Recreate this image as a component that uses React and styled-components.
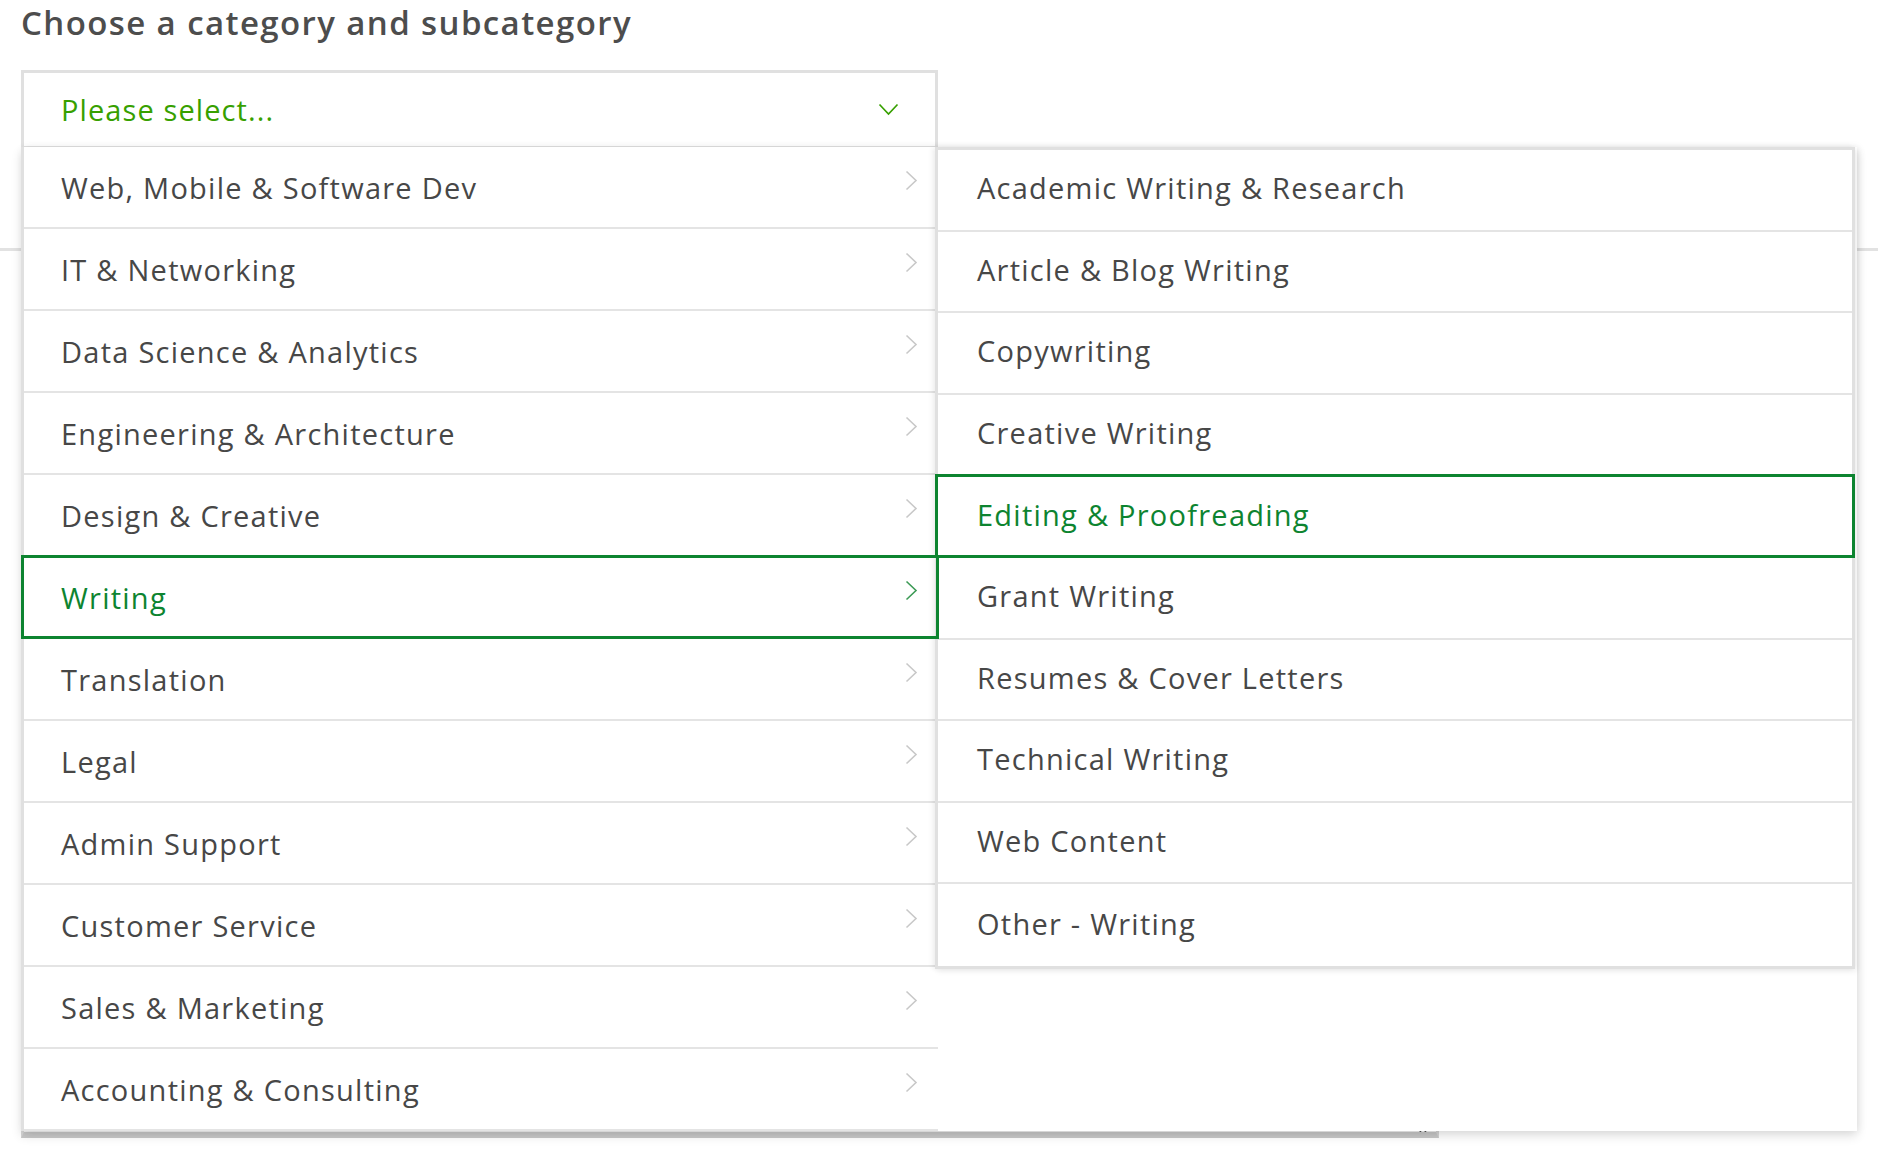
import React from "react";
import styled, { createGlobalStyle, css } from "styled-components";

const GlobalStyle = createGlobalStyle`
  html, body { margin: 0; padding: 0; background: #ffffff; }
  body { font-family: "Open Sans", "Liberation Sans", sans-serif; color: #4a4a4a; }
  * { box-sizing: border-box; }
`;

const GREEN = "#0d8430";
const LIGHT_GREEN = "#37a000";

const Page = styled.div`
  position: relative;
  width: 1878px;
  height: 1158px;
  overflow: hidden;
`;

const Header = styled.div`
  padding-left: 21px;
`;

const Title = styled.h2`
  margin: 0;
  font-size: 33px;
  line-height: 46px;
  font-weight: 600;
  color: #4d4d4d;
  letter-spacing: 1.4px;
`;

const Field = styled.div`
  position: relative;
  width: 917px;
  margin-top: 24px;
`;

const SelectBox = styled.div`
  height: 79px;
  border: 3px solid #e0e0e0;
  display: flex;
  align-items: center;
  justify-content: space-between;
  padding: 0 36px 0 37px;
  background: #fff;
`;

const Placeholder = styled.span`
  font-size: 29px;
  color: ${LIGHT_GREEN};
  letter-spacing: 1.1px;
`;

const Divider = styled.div`
  height: 3px;
  background: #e2e2e2;
  margin-top: 99px;
  width: 100%;
`;

const TextAreaBack = styled.div`
  position: relative;
  margin: 40px 0 0 21px;
  width: 1418px;
  height: 847px;
  border: 3px solid #d6d6d6;
  border-bottom: 6px solid #c8c8c8;
  background: #f4f4f4;
`;

const Grip = styled.svg`
  position: absolute;
  right: 6px;
  bottom: 0px;
`;

const Panel = styled.div`
  position: absolute;
  top: 77px;
  left: 0;
  width: 1836px;
  display: flex;
  align-items: flex-start;
  background: #fff;
  box-shadow: 0 5px 10px rgba(0, 0, 0, 0.12), 2px 0 8px rgba(0, 0, 0, 0.06);
  z-index: 5;
`;

const List = styled.ul`
  list-style: none;
  margin: 0;
  padding: 0;
  background: #fff;
`;

const CategoryList = styled(List)`
  width: 917px;
  border-left: 3px solid #e0e0e0;
`;

const SubList = styled(List)`
  width: 920px;
  margin-left: -3px;
  border: 3px solid #e0e0e0;
  box-shadow: 2px 2px 6px rgba(0, 0, 0, 0.08), -3px 0 5px rgba(0, 0, 0, 0.05);
  position: relative;
  z-index: 2;
`;

const Row = styled.li`
  position: relative;
  height: ${(p) => p.$h}px;
  border-bottom: 2px solid #e4e4e4;
  display: flex;
  align-items: center;
  justify-content: space-between;
  padding: 0 20px ${(p) => p.$lift}px ${(p) => p.$pad}px;
  font-size: 29px;
  color: ${(p) => (p.$active ? GREEN : "#474747")};
  letter-spacing: 1.25px;
  &:last-child {
    border-bottom: ${(p) => (p.$last ? "none" : "2px solid #e4e4e4")};
  }
  ${(p) =>
    p.$active &&
    css`
      &::after {
        content: "";
        position: absolute;
        top: -2px;
        bottom: -2px;
        left: -3px;
        right: ${p.$wide ? "-3px" : "-1px"};
        border: 3px solid ${GREEN};
        pointer-events: none;
        z-index: 3;
      }
    `}
`;

const Chevron = styled.svg`
  flex: none;
  margin-bottom: 14px;
`;

const ChevronRight = ({ active }) => (
  <Chevron width="13" height="21" viewBox="0 0 13 21">
    <polyline
      points="1.5,1.5 11,10.5 1.5,19.5"
      fill="none"
      stroke={active ? "#3c9a55" : "#c8c8c8"}
      strokeWidth="1.6"
    />
  </Chevron>
);

const ChevronDown = () => (
  <svg width="21" height="13" viewBox="0 0 21 13">
    <polyline
      points="1.5,1.5 10.5,11 19.5,1.5"
      fill="none"
      stroke={LIGHT_GREEN}
      strokeWidth="1.7"
    />
  </svg>
);

const categories = [
  "Web, Mobile & Software Dev",
  "IT & Networking",
  "Data Science & Analytics",
  "Engineering & Architecture",
  "Design & Creative",
  "Writing",
  "Translation",
  "Legal",
  "Admin Support",
  "Customer Service",
  "Sales & Marketing",
  "Accounting & Consulting",
];

const subcategories = [
  "Academic Writing & Research",
  "Article & Blog Writing",
  "Copywriting",
  "Creative Writing",
  "Editing & Proofreading",
  "Grant Writing",
  "Resumes & Cover Letters",
  "Technical Writing",
  "Web Content",
  "Other - Writing",
];

export default function App() {
  return (
    <>
      <GlobalStyle />
      <Page>
        <Header>
          <Title>Choose a category and subcategory</Title>
          <Field>
            <SelectBox>
              <Placeholder>Please select...</Placeholder>
              <ChevronDown />
            </SelectBox>
            <Panel>
              <CategoryList>
                {categories.map((c) => (
                  <Row key={c} $h={82} $lift={0} $pad={37} $active={c === "Writing"}>
                    <span>{c}</span>
                    <ChevronRight active={c === "Writing"} />
                  </Row>
                ))}
              </CategoryList>
              <SubList>
                {subcategories.map((s) => (
                  <Row
                    key={s}
                    $h={81.6}
                    $lift={4}
                    $pad={39}
                    $wide
                    $last
                    $active={s === "Editing & Proofreading"}
                  >
                    <span>{s}</span>
                  </Row>
                ))}
              </SubList>
            </Panel>
          </Field>
        </Header>
        <Divider />
        <TextAreaBack>
          <Grip width="12" height="8" viewBox="0 0 12 8">
            <line x1="2" y1="8" x2="5" y2="3" stroke="#555" strokeWidth="1.6" />
            <line x1="7" y1="8" x2="10" y2="3" stroke="#555" strokeWidth="1.6" />
          </Grip>
        </TextAreaBack>
      </Page>
    </>
  );
}
